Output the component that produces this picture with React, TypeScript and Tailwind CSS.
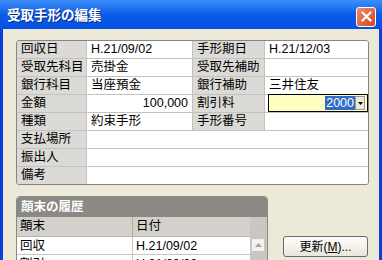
import React from "react";

const font = { fontFamily: '"Liberation Sans", "Noto Sans CJK JP", sans-serif' };

type Row = { label: string; value?: string; right?: boolean; label2?: string; value2?: React.ReactNode };

const rows: Row[] = [
  { label: "回収日", value: "H.21/09/02", label2: "手形期日", value2: "H.21/12/03" },
  { label: "受取先科目", value: "売掛金", label2: "受取先補助", value2: "" },
  { label: "銀行科目", value: "当座預金", label2: "銀行補助", value2: "三井住友" },
  { label: "金額", value: "100,000", right: true, label2: "割引料", value2: "combo" },
  { label: "種類", value: "約束手形", label2: "手形番号", value2: "" },
  { label: "支払場所" },
  { label: "振出人" },
  { label: "備考" },
];

function Combo() {
  return (
    <div className="flex h-[18px] items-center border border-black bg-[#ffffc4] pr-[2px] -ml-px -mt-px">
      <div className="flex flex-1 justify-end">
        <span className="bg-[#316ac5] px-px leading-[14px] text-white">2000</span>
      </div>
      <div className="flex h-[14px] w-[10px] items-center justify-center border border-[#9a9a9a] bg-[#ece9d8]">
        <svg width="5" height="3" viewBox="0 0 5 3">
          <path d="M0 0h5L2.5 3z" fill="#000" />
        </svg>
      </div>
    </div>
  );
}

export default function App() {
  return (
    <div
      className="flex h-[260px] w-[382px] flex-col overflow-hidden bg-[#0a3fd8] text-[12.5px] text-black"
      style={font}
    >
      {/* title bar */}
      <div className="flex h-[29px] shrink-0 items-center justify-between bg-gradient-to-b from-[#3d8ef7] via-[#0a5ce8] to-[#0450e0] pl-[7px] pr-[6px]">
        <span className="mt-[2px] text-[13.5px] font-bold leading-[16px] text-white [text-shadow:1px_1px_0_#0a2a8a]">受取手形の編集</span>
        <div className="mt-[4px] flex h-[20px] w-[20px] items-center justify-center rounded-[3px] border border-white bg-gradient-to-br from-[#ee8a6a] to-[#d2451d]">
          <svg width="11" height="11" viewBox="0 0 11 11">
            <path d="M1.5 1.5l8 8M9.5 1.5l-8 8" stroke="#fff" strokeWidth="2.2" strokeLinecap="round" />
          </svg>
        </div>
      </div>

      {/* body */}
      <div className="mx-[3px] min-h-0 flex-1 overflow-hidden bg-[#ece9d8] pl-[13px] pr-[10px] pt-[11px]">
        <div className="overflow-hidden rounded-[3px] border border-[#858585]">
          <div className="grid grid-cols-[69px_105px_71px_1fr] gap-px bg-[#c4c2bd]">
            {rows.map((r) =>
              r.label2 ? (
                <React.Fragment key={r.label}>
                  <div className="h-[17px] bg-[#dcdad6] pl-[4px] leading-[17px]">{r.label}</div>
                  <div className={`h-[17px] bg-white px-[4px] leading-[17px] ${r.right ? "text-right" : ""}`}>{r.value}</div>
                  <div className="h-[17px] bg-[#dcdad6] pl-[4px] leading-[17px]">{r.label2}</div>
                  <div className="h-[17px] bg-white pl-[4px] leading-[17px]">
                    {r.value2 === "combo" ? <Combo /> : r.value2}
                  </div>
                </React.Fragment>
              ) : (
                <React.Fragment key={r.label}>
                  <div className="h-[17px] bg-[#dcdad6] pl-[4px] leading-[17px]">{r.label}</div>
                  <div className="col-span-3 h-[17px] bg-white" />
                </React.Fragment>
              )
            )}
          </div>
        </div>

        <div className="mt-[11px] flex items-start">
          {/* history panel */}
          <div className="w-[252px] overflow-hidden rounded-t-[4px] border border-[#8a8882]">
            <div className="h-[20px] bg-[#8b8984] pl-[4px] font-bold leading-[20px] text-white">顛末の履歴</div>
            <div className="flex">
              <div className="flex-1">
                <div className="grid h-[19px] grid-cols-[116px_1fr] bg-[#d4d1ca]">
                  <div className="border-r border-[#b0aea8] pl-[3px] leading-[19px]">顛末</div>
                  <div className="pl-[3px] leading-[19px]">日付</div>
                </div>
                <div className="grid h-[18px] grid-cols-[116px_1fr] border-t border-[#b8b6b0] bg-white">
                  <div className="border-r border-[#c8c6c0] pl-[3px] leading-[18px]">回収</div>
                  <div className="pl-[3px] leading-[18px]">H.21/09/02</div>
                </div>
                <div className="grid h-[18px] grid-cols-[116px_1fr] border-t border-[#c8c6c0] bg-white">
                  <div className="border-r border-[#c8c6c0] pl-[3px] leading-[18px]">割引</div>
                  <div className="pl-[3px] leading-[18px]">H.21/09/02</div>
                </div>
              </div>
              <div className="w-[17px] bg-[#c9c7c1] pt-[21px]">
                <div className="ml-[1px] flex h-[14px] w-[14px] items-center justify-center rounded-[2px] border border-[#c8c6c0] bg-[#f3f2ee]">
                  <svg width="7" height="4" viewBox="0 0 7 4">
                    <path d="M0 4L3.5 0 7 4z" fill="#a5a39c" />
                  </svg>
                </div>
              </div>
            </div>
          </div>

          {/* button */}
          <button className="ml-[15px] mt-[40px] flex h-[21px] w-[85px] items-center justify-center rounded-[3px] border border-[#6b6b6b] bg-gradient-to-b from-[#fdfdfb] to-[#e8e6dc] text-[12px]">
            更新(<span className="underline">M</span>)...
          </button>
        </div>
      </div>
    </div>
  );
}
